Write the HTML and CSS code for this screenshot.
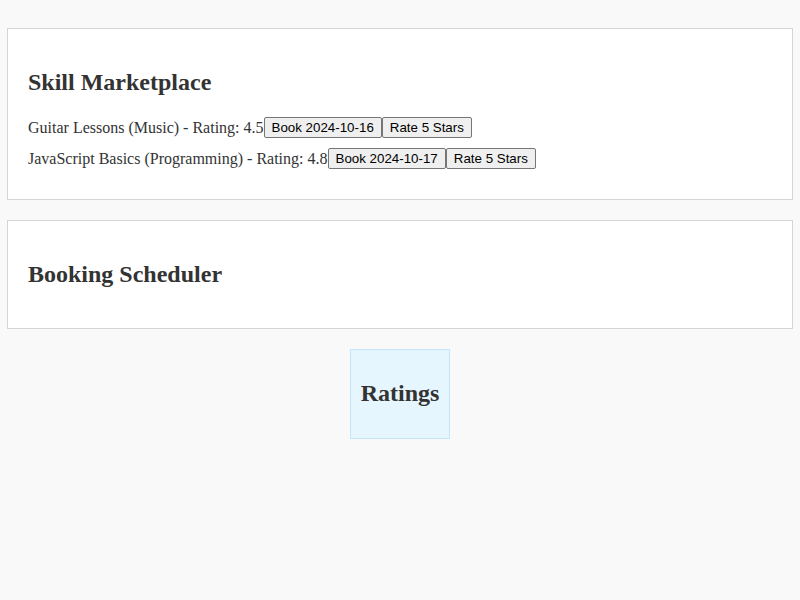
FILE: index.html
```html
<!DOCTYPE html>
<html>
<head>
<meta charset="utf-8">
<link rel="stylesheet" href="styles.css">
</head>
<body>
<section class="panel">
  <h2>Skill Marketplace</h2>
  <div class="item">Guitar Lessons (Music) - Rating: 4.5<button>Book 2024-10-16</button><button>Rate 5 Stars</button></div>
  <div class="item">JavaScript Basics (Programming) - Rating: 4.8<button>Book 2024-10-17</button><button>Rate 5 Stars</button></div>
</section>
<section class="panel">
  <h2>Booking Scheduler</h2>
</section>
<div class="ratings">
  <h2>Ratings</h2>
</div>
</body>
</html>
```
FILE: styles.css
```css
html, body {
  background: #f9f9f9;
}
body {
  margin: 8px 7px;
  font-family: "Liberation Serif", serif;
  color: #333;
}
.panel {
  background: #fff;
  border: 1px solid #d4d4d4;
  padding: 20px;
  margin: 20px 0;
}
h2 {
  font-size: 24px;
  line-height: 27.5px;
  margin: 20px 0;
}
.item {
  margin: 10px 0;
  font-size: 16px;
  line-height: 21px;
  display: flex;
  align-items: center;
}
.item button {
  font-family: "Liberation Sans", Arial, sans-serif;
  font-size: 13.333px;
  line-height: 15px;
  height: 21px;
  color: #000;
  background: #efefef;
  border: 1px solid #767676;
  border-radius: 2px;
  padding: 2px 7px;
  margin: 0;
}
.ratings {
  width: fit-content;
  margin: 20px auto;
  background: #e6f6ff;
  border: 1px solid #c2e6f8;
  padding: 10px;
}
```
